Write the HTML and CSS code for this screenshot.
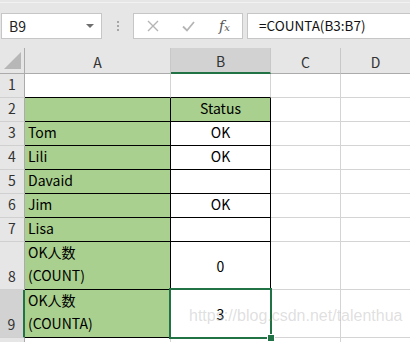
FILE: index.html
```html
<!DOCTYPE html>
<html lang="ja">
<head>
  <meta charset="UTF-8">
  <title>COUNTA</title>
  <link rel="stylesheet" href="styles.css">
</head>
<body>
  <div class="toolbar">
    <div class="namebox">
      <span>B9</span>
      <span class="arrow"></span>
    </div>
    <div class="dots"><i></i><i></i><i></i></div>
    <div class="fxbox">
      <svg class="ico" width="12" height="12" viewBox="0 0 12 12"><path d="M1 1L11 11M11 1L1 11" stroke="#b5b5b5" stroke-width="1.4" fill="none"/></svg>
      <svg class="ico" width="13" height="11" viewBox="0 0 13 11"><path d="M1 5.5L5 9.5L12 1" stroke="#b5b5b5" stroke-width="1.8" fill="none"/></svg>
      <span class="fx">f<sub>x</sub></span>
    </div>
    <div class="formula">=COUNTA(B3:B7)</div>
  </div>

  <div class="sheet">
    <div class="hd corner"><span class="tri"></span></div>
    <div class="hd col">A</div>
    <div class="hd col sel-col">B</div>
    <div class="hd col">C</div>
    <div class="hd col">D</div>

    <div class="hd row">1</div>
    <div class="c bb"></div>
    <div class="c bb"></div>
    <div class="c"></div>
    <div class="c"></div>

    <div class="hd row">2</div>
    <div class="c t g"></div>
    <div class="c t g mid">Status</div>
    <div class="c"></div>
    <div class="c"></div>

    <div class="hd row">3</div>
    <div class="c t g">Tom</div>
    <div class="c t mid">OK</div>
    <div class="c"></div>
    <div class="c"></div>

    <div class="hd row">4</div>
    <div class="c t g">Lili</div>
    <div class="c t mid">OK</div>
    <div class="c"></div>
    <div class="c"></div>

    <div class="hd row">5</div>
    <div class="c t g">Davaid</div>
    <div class="c t mid"></div>
    <div class="c"></div>
    <div class="c"></div>

    <div class="hd row">6</div>
    <div class="c t g">Jim</div>
    <div class="c t mid">OK</div>
    <div class="c"></div>
    <div class="c"></div>

    <div class="hd row">7</div>
    <div class="c t g">Lisa</div>
    <div class="c t mid"></div>
    <div class="c"></div>
    <div class="c"></div>

    <div class="hd row">8</div>
    <div class="c t g wrap">OK人数<br>(COUNT)</div>
    <div class="c t mid center">0</div>
    <div class="c"></div>
    <div class="c"></div>

    <div class="hd row sel-row">9</div>
    <div class="c t g wrap">OK人数<br>(COUNTA)</div>
    <div class="c t mid center active">3<span class="handle"></span></div>
    <div class="c"></div>
    <div class="c"></div>

    <div class="hd row"></div>
    <div class="c"></div>
    <div class="c"></div>
    <div class="c"></div>
    <div class="c"></div>

    <div class="mark">https://blog.csdn.net/talenthua</div>
  </div>
</body>
</html>
```

FILE: styles.css
```css
body {
  margin: 0;
  width: 410px;
  height: 342px;
  overflow: hidden;
  background: #fff;
  font-family: "Noto Sans CJK JP", "Noto Sans", sans-serif;
  font-size: 14px;
  color: #000;
}
.toolbar {
  height: 48px;
  box-sizing: border-box;
  padding-top: 13px;
  display: flex;
  align-items: flex-start;
  background: linear-gradient(#e6e6e6 2px, #f2f2f2 2px, #f2f2f2 3px, #e6e6e6 3px);
}
.namebox {
  margin-left: 1px;
  width: 101px;
  height: 26px;
  box-sizing: border-box;
  border: 1px solid #c6c6c6;
  background: #fff;
  display: flex;
  align-items: center;
  justify-content: space-between;
  padding: 0 7px 0 7px;
  font-size: 14px;
  color: #222;
}
.arrow {
  width: 0;
  height: 0;
  border-left: 4px solid transparent;
  border-right: 4px solid transparent;
  border-top: 4px solid #6e6e6e;
}
.dots {
  width: 31px;
  height: 26px;
  display: flex;
  flex-direction: column;
  align-items: center;
  justify-content: center;
  gap: 2px;
}
.dots i {
  width: 2px;
  height: 2px;
  background: #a6a6a6;
}
.fxbox {
  width: 110px;
  height: 26px;
  box-sizing: border-box;
  border: 1px solid #c6c6c6;
  background: #fff;
  display: flex;
  align-items: center;
  padding-left: 13px;
}
.ico {
  margin-right: 23px;
}
.fx {
  font-family: "DejaVu Serif", serif;
  font-style: italic;
  font-size: 14px;
  color: #555;
  margin-left: 1px;
}
.fx sub {
  font-size: 10px;
  vertical-align: 0;
}
.formula {
  margin-left: 4px;
  flex: 1;
  height: 26px;
  box-sizing: border-box;
  border: 1px solid #c6c6c6;
  border-right: none;
  background: #fff;
  padding-left: 11px;
  line-height: 23px;
  font-size: 13.5px;
  color: #111;
}
.sheet {
  position: relative;
  display: grid;
  grid-template-columns: 25px 146px 100px 70px 70px;
  grid-template-rows: 26px repeat(7, 24px) 48px 48px 24px;
}
.sheet > div {
  box-sizing: border-box;
}
.hd {
  background: #e6e6e6;
  color: #333;
  border-right: 1px solid #c8c8c8;
  border-bottom: 1px solid #ababab;
}
.col {
  display: flex;
  align-items: center;
  justify-content: center;
  padding-top: 2px;
}
.corner {
  position: relative;
  border-right-color: #ababab;
}
.tri {
  position: absolute;
  left: 4px;
  bottom: 4px;
  width: 0;
  height: 0;
  border-left: 17px solid transparent;
  border-bottom: 17px solid #b7b7b7;
}
.row {
  display: flex;
  align-items: flex-end;
  justify-content: center;
  line-height: 22px;
  padding-bottom: 2px;
  border-right: 1px solid #ababab;
  border-bottom: 1px solid #d0d0d0;
}
.sel-col {
  background: #d2d2d2;
  border-bottom: 2px solid #217346;
}
.sel-row {
  background: #d2d2d2;
  border-right: 2px solid #217346;
}
.c {
  border-right: 1px solid #d4d4d4;
  border-bottom: 1px solid #d4d4d4;
  display: flex;
  align-items: flex-end;
  padding: 0 3px 2px;
  line-height: 22px;
}
.bb {
  border-bottom-color: #000;
}
.t {
  border-right-color: #000;
  border-bottom-color: #000;
}
.g {
  background: #a9d08e;
}
.mid {
  justify-content: center;
}
.wrap {
  line-height: 23px;
}
.center {
  align-items: center;
  padding-bottom: 0;
}
.active {
  position: relative;
}
.active::after {
  content: "";
  position: absolute;
  left: -2px;
  top: -2px;
  right: -2px;
  bottom: -2px;
  border: 2px solid #217346;
}
.handle {
  position: absolute;
  right: -5px;
  bottom: -5px;
  width: 6px;
  height: 6px;
  background: #217346;
  border: 1px solid #fff;
  z-index: 2;
}
.mark {
  position: absolute;
  left: 189px;
  top: 259px;
  font-family: "Liberation Sans", Arial, sans-serif;
  font-size: 16px;
  color: rgba(185, 185, 185, 0.45);
  white-space: nowrap;
  z-index: 3;
}
```
